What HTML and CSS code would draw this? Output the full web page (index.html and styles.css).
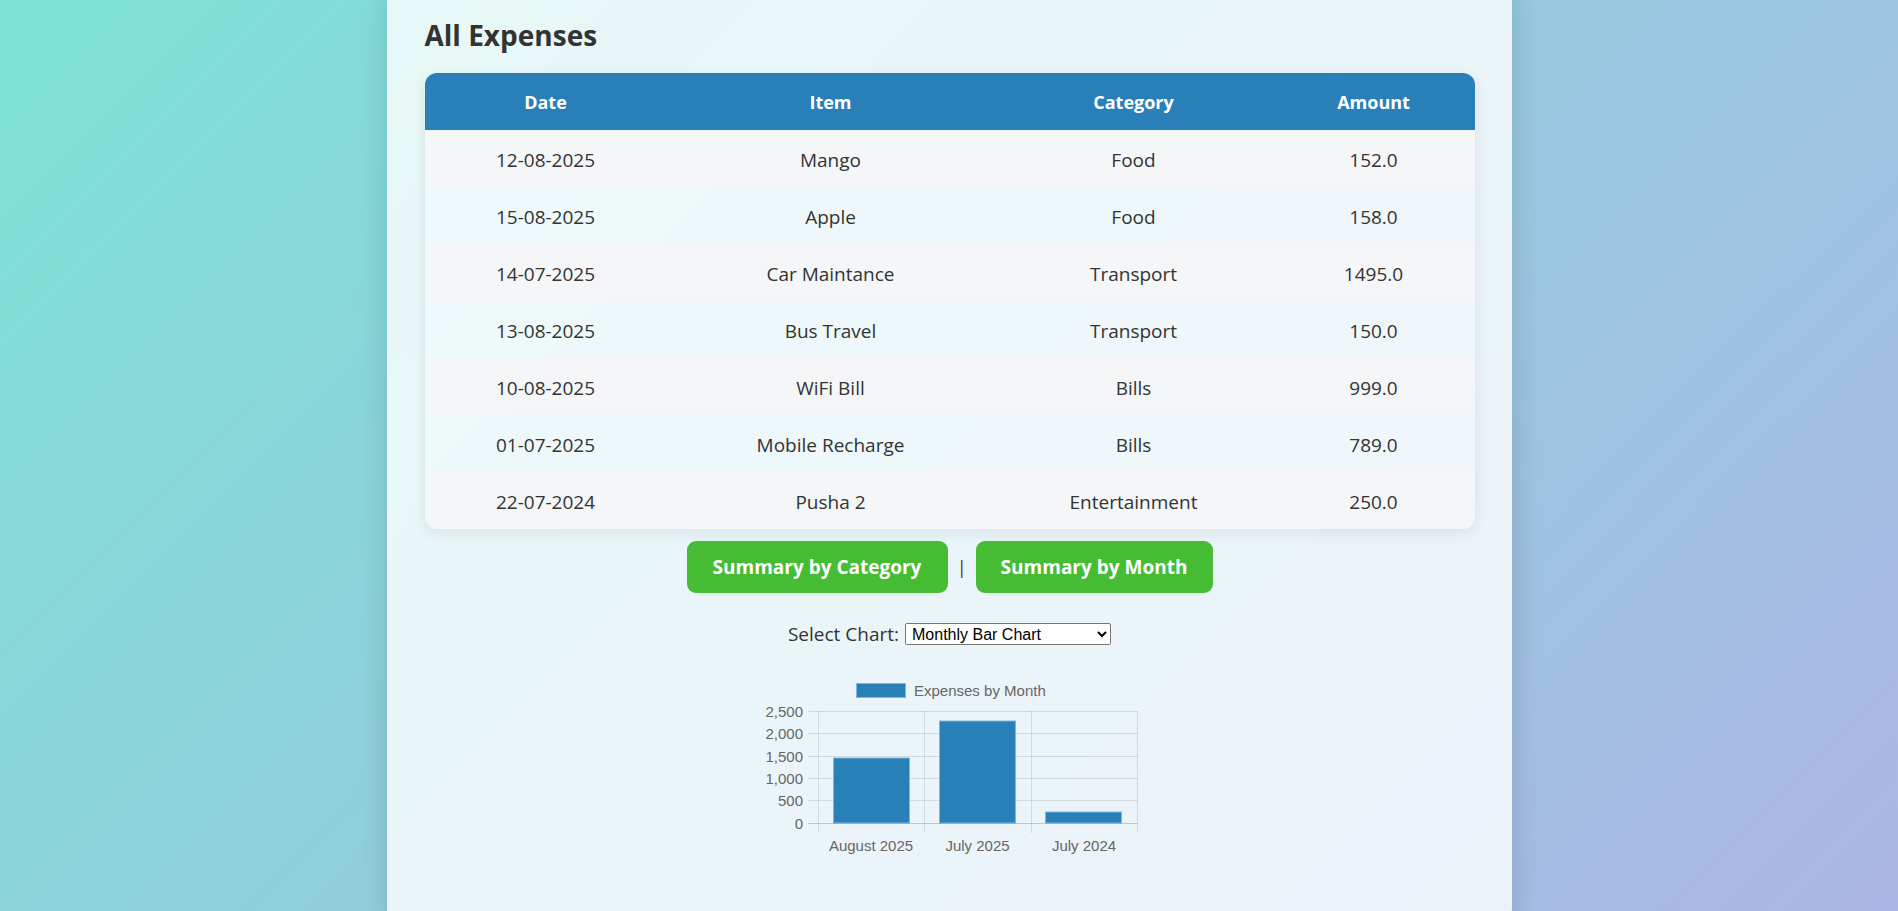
FILE: index.html
```html
<!DOCTYPE html>
<html lang="en">
<head>
<meta charset="utf-8">
<title>All Expenses</title>
<link rel="stylesheet" href="styles.css">
</head>
<body>
<main class="card">
  <h2 class="title">All Expenses</h2>
  <table class="expenses">
    <colgroup>
      <col class="c-date"><col class="c-item"><col class="c-cat"><col class="c-amt">
    </colgroup>
    <thead>
      <tr><th>Date</th><th>Item</th><th>Category</th><th>Amount</th></tr>
    </thead>
    <tbody>
      <tr><td>12-08-2025</td><td>Mango</td><td>Food</td><td>152.0</td></tr>
      <tr><td>15-08-2025</td><td>Apple</td><td>Food</td><td>158.0</td></tr>
      <tr><td>14-07-2025</td><td>Car Maintance</td><td>Transport</td><td>1495.0</td></tr>
      <tr><td>13-08-2025</td><td>Bus Travel</td><td>Transport</td><td>150.0</td></tr>
      <tr><td>10-08-2025</td><td>WiFi Bill</td><td>Bills</td><td>999.0</td></tr>
      <tr><td>01-07-2025</td><td>Mobile Recharge</td><td>Bills</td><td>789.0</td></tr>
      <tr><td>22-07-2024</td><td>Pusha 2</td><td>Entertainment</td><td>250.0</td></tr>
    </tbody>
  </table>

  <div class="actions">
    <a class="btn btn-cat" href="#">Summary by Category</a>
    <span class="sep">|</span>
    <a class="btn btn-month" href="#">Summary by Month</a>
  </div>

  <div class="chart-select">
    <label for="chartType">Select Chart:</label>
    <select id="chartType" class="select">
      <option>Monthly Bar Chart</option>
      <option>Category Pie Chart</option>
    </select>
  </div>

  <div class="chart-wrap">
    <svg class="chart" width="400" height="200" viewBox="0 0 400 200" xmlns="http://www.w3.org/2000/svg">
      <!-- legend -->
      <rect x="106.5" y="13.5" width="49" height="14" fill="#2980b9" stroke="#7db8e2" stroke-width="1"/>
      <text x="164" y="26" class="lbl">Expenses by Month</text>
      <!-- horizontal grid -->
      <g stroke="rgba(0,0,0,0.1)" stroke-width="1">
        <line x1="58" y1="41.5" x2="387.5" y2="41.5"/>
        <line x1="58" y1="63.5" x2="387.5" y2="63.5"/>
        <line x1="58" y1="86.5" x2="387.5" y2="86.5"/>
        <line x1="58" y1="108.5" x2="387.5" y2="108.5"/>
        <line x1="58" y1="130.5" x2="387.5" y2="130.5"/>
      </g>
      <!-- vertical grid -->
      <g stroke="rgba(0,0,0,0.1)" stroke-width="1">
        <line x1="68.5" y1="41" x2="68.5" y2="163"/>
        <line x1="174.5" y1="41" x2="174.5" y2="163"/>
        <line x1="281.5" y1="41" x2="281.5" y2="163"/>
        <line x1="387.5" y1="41" x2="387.5" y2="163"/>
      </g>
      <!-- bars -->
      <g fill="#2980b9" stroke="#7db8e2" stroke-width="1">
        <rect x="83.5" y="88" width="76" height="65"/>
        <rect x="189.5" y="51" width="76" height="102"/>
        <rect x="295.5" y="142" width="76" height="11"/>
      </g>
      <line x1="58" y1="153.5" x2="387.5" y2="153.5" stroke="rgba(0,0,0,0.18)" stroke-width="1"/>
      <!-- y labels -->
      <g class="lbl" text-anchor="end">
        <text x="53" y="47">2,500</text>
        <text x="53" y="69">2,000</text>
        <text x="53" y="92">1,500</text>
        <text x="53" y="114">1,000</text>
        <text x="53" y="136">500</text>
        <text x="53" y="159">0</text>
      </g>
      <!-- x labels -->
      <g class="lbl" text-anchor="middle">
        <text x="121" y="181">August 2025</text>
        <text x="227.5" y="181">July 2025</text>
        <text x="334" y="181">July 2024</text>
      </g>
    </svg>
  </div>
</main>
</body>
</html>
```

FILE: styles.css
```css
html, body {
  margin: 0;
  padding: 0;
}

body {
  height: 100vh;
  overflow: hidden;
  background: linear-gradient(135deg, #7de2d6 0%, #abb6e5 100%);
  font-family: "Open Sans", "Noto Sans", sans-serif;
  color: #333;
}

.card {
  box-sizing: border-box;
  width: 1125px;
  margin: -20px auto 0;
  padding: 36px 37px 58px 38px;
  background: rgba(255, 255, 255, 0.8);
  border-radius: 20px;
  box-shadow: 0 4px 30px rgba(0, 0, 0, 0.15);
}

.title {
  margin: 0 0 19px;
  font-size: 28px;
  line-height: 38px;
  font-weight: 700;
  color: #333;
}

.expenses {
  width: 100%;
  border-collapse: collapse;
  border-radius: 12px;
  overflow: hidden;
  box-shadow: 0 4px 14px rgba(0, 0, 0, 0.08);
  table-layout: fixed;
}

.c-date { width: 242px; }
.c-item { width: 328px; }
.c-cat { width: 278px; }
.c-amt { width: 202px; }

.expenses th {
  background: #2980b9;
  color: #fff;
  font-size: 18px;
  font-weight: 700;
  line-height: 27px;
  padding: 16px 0 14px;
  text-align: center;
}

.expenses td {
  font-size: 19px;
  line-height: 27px;
  padding: 17px 0 13px;
  text-align: center;
  color: #333;
}

.expenses tbody tr:nth-child(odd) {
  background: #f4f6f8;
}

.expenses tbody tr:nth-child(even) {
  background: rgba(255, 255, 255, 0.25);
}

.actions {
  display: flex;
  justify-content: center;
  align-items: center;
  margin-top: 12px;
}

.btn {
  display: block;
  background: #45bc34;
  color: #fff;
  text-decoration: none;
  font-size: 19px;
  font-weight: 700;
  line-height: 26px;
  padding: 13px 25px;
  border-radius: 9px;
}

.btn-cat { width: 211px; text-align: center; }
.btn-month { width: 187px; text-align: center; }

.sep {
  font-size: 19px;
  color: #444;
  line-height: 26px;
  width: 4px;
  margin: 0 15px 0 9px;
  text-align: center;
}

.chart-select {
  display: flex;
  justify-content: center;
  align-items: center;
  gap: 6px;
  margin-top: 28px;
  height: 26px;
}

.chart-select label {
  font-size: 19px;
  color: #333;
}

.select {
  width: 206px;
  height: 22px;
  font-family: "Liberation Sans", Arial, sans-serif;
  font-size: 16px;
  color: #000;
  background: #fff;
  border: 1px solid #767676;
  border-radius: 2px;
  padding: 0 2px;
}

.chart-wrap {
  display: flex;
  justify-content: center;
  margin-top: 23px;
}

.chart {
  display: block;
}

.lbl {
  font-family: "Liberation Sans", Arial, sans-serif;
  font-size: 15px;
  fill: #666;
}
```
